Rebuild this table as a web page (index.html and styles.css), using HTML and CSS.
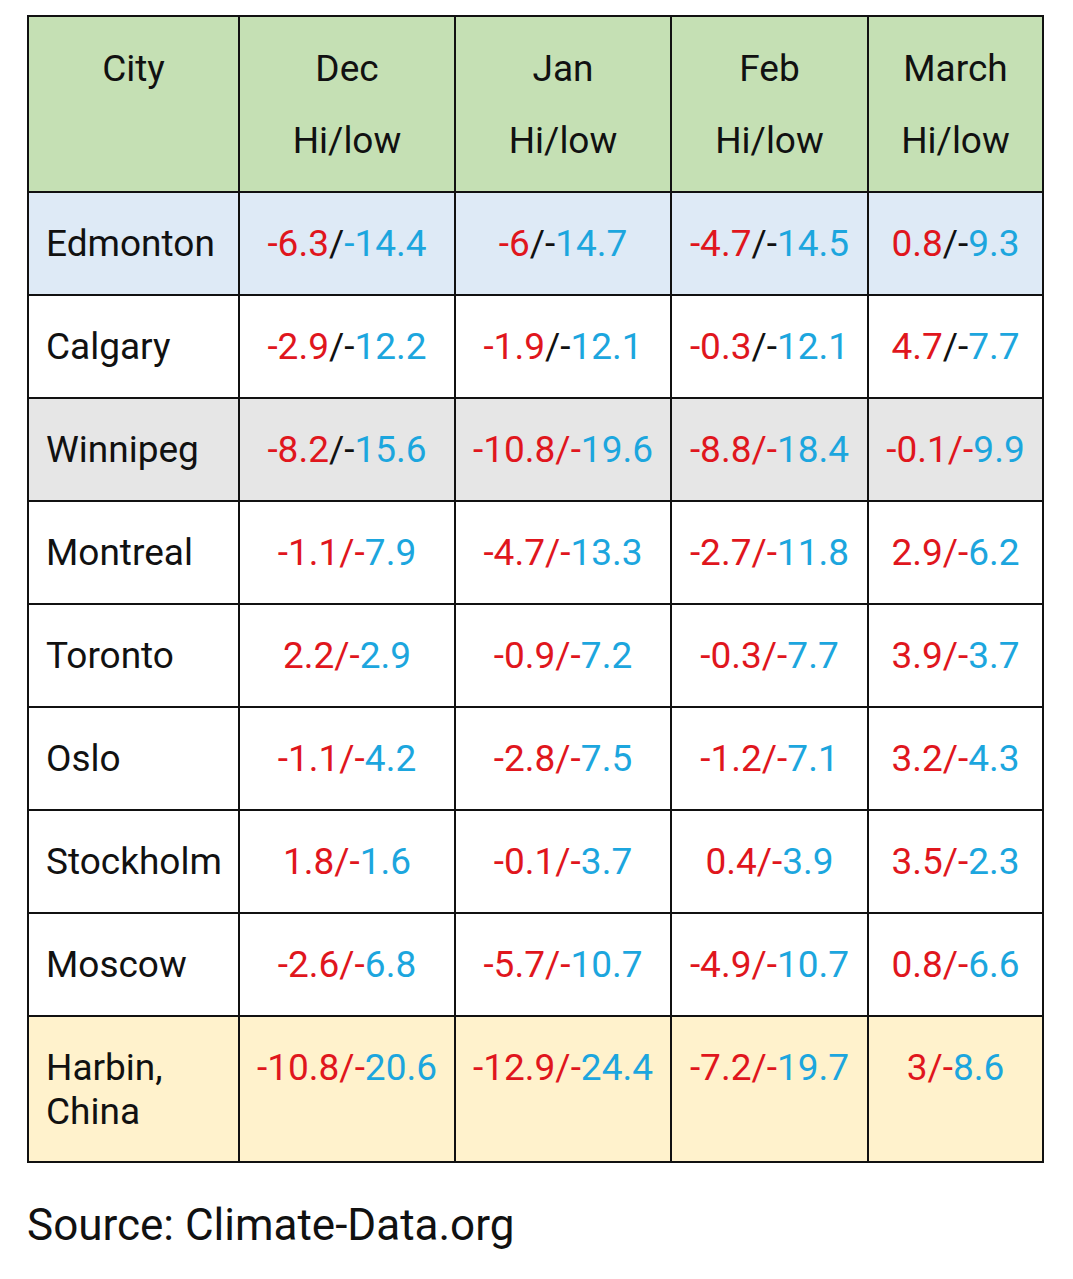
FILE: index.html
```html
<!DOCTYPE html>
<html>
<head>
<meta charset="utf-8">
<link rel="stylesheet" href="styles.css">
</head>
<body>
<div class="page">
<table class="climate">
  <colgroup>
    <col class="c-city"><col class="c-dec"><col class="c-jan"><col class="c-feb"><col class="c-mar">
  </colgroup>
  <thead>
    <tr class="head">
      <th class="city-h"><span class="ln">City</span></th>
      <th><span class="ln">Dec</span><span class="ln">Hi/low</span></th>
      <th><span class="ln">Jan</span><span class="ln">Hi/low</span></th>
      <th><span class="ln">Feb</span><span class="ln">Hi/low</span></th>
      <th><span class="ln">March</span><span class="ln">Hi/low</span></th>
    </tr>
  </thead>
  <tbody>
    <tr class="r-blue">
      <td class="city">Edmonton</td>
      <td><span class="hi">-6.3</span><span class="sep">/</span><span class="lo">-14.4</span></td>
      <td><span class="hi">-6</span><span class="sep">/-</span><span class="lo">14.7</span></td>
      <td><span class="hi">-4.7</span><span class="sep">/-</span><span class="lo">14.5</span></td>
      <td><span class="hi">0.8</span><span class="sep">/-</span><span class="lo">9.3</span></td>
    </tr>
    <tr>
      <td class="city">Calgary</td>
      <td><span class="hi">-2.9</span><span class="sep">/-</span><span class="lo">12.2</span></td>
      <td><span class="hi">-1.9</span><span class="sep">/-</span><span class="lo">12.1</span></td>
      <td><span class="hi">-0.3</span><span class="sep">/-</span><span class="lo">12.1</span></td>
      <td><span class="hi">4.7</span><span class="sep">/-</span><span class="lo">7.7</span></td>
    </tr>
    <tr class="r-grey">
      <td class="city">Winnipeg</td>
      <td><span class="hi">-8.2</span><span class="sep">/-</span><span class="lo">15.6</span></td>
      <td><span class="hi">-10.8/-</span><span class="lo">19.6</span></td>
      <td><span class="hi">-8.8/-</span><span class="lo">18.4</span></td>
      <td><span class="hi">-0.1/-</span><span class="lo">9.9</span></td>
    </tr>
    <tr>
      <td class="city">Montreal</td>
      <td><span class="hi">-1.1/-</span><span class="lo">7.9</span></td>
      <td><span class="hi">-4.7/-</span><span class="lo">13.3</span></td>
      <td><span class="hi">-2.7/-</span><span class="lo">11.8</span></td>
      <td><span class="hi">2.9/-</span><span class="lo">6.2</span></td>
    </tr>
    <tr>
      <td class="city">Toronto</td>
      <td><span class="hi">2.2/-</span><span class="lo">2.9</span></td>
      <td><span class="hi">-0.9/-</span><span class="lo">7.2</span></td>
      <td><span class="hi">-0.3/-</span><span class="lo">7.7</span></td>
      <td><span class="hi">3.9/-</span><span class="lo">3.7</span></td>
    </tr>
    <tr>
      <td class="city">Oslo</td>
      <td><span class="hi">-1.1/-</span><span class="lo">4.2</span></td>
      <td><span class="hi">-2.8/-</span><span class="lo">7.5</span></td>
      <td><span class="hi">-1.2/-</span><span class="lo">7.1</span></td>
      <td><span class="hi">3.2/-</span><span class="lo">4.3</span></td>
    </tr>
    <tr>
      <td class="city">Stockholm</td>
      <td><span class="hi">1.8/-</span><span class="lo">1.6</span></td>
      <td><span class="hi">-0.1/-</span><span class="lo">3.7</span></td>
      <td><span class="hi">0.4/-</span><span class="lo">3.9</span></td>
      <td><span class="hi">3.5/-</span><span class="lo">2.3</span></td>
    </tr>
    <tr>
      <td class="city">Moscow</td>
      <td><span class="hi">-2.6/-</span><span class="lo">6.8</span></td>
      <td><span class="hi">-5.7/-</span><span class="lo">10.7</span></td>
      <td><span class="hi">-4.9/-</span><span class="lo">10.7</span></td>
      <td><span class="hi">0.8/-</span><span class="lo">6.6</span></td>
    </tr>
    <tr class="r-yellow tall">
      <td class="city">Harbin,<br>China</td>
      <td><span class="hi">-10.8/-</span><span class="lo">20.6</span></td>
      <td><span class="hi">-12.9/-</span><span class="lo">24.4</span></td>
      <td><span class="hi">-7.2/-</span><span class="lo">19.7</span></td>
      <td><span class="hi">3/-</span><span class="lo">8.6</span></td>
    </tr>
  </tbody>
</table>
<p class="source">Source: Climate-Data.org</p>
</div>
</body>
</html>
```
FILE: styles.css
```css
html, body {
  margin: 0;
  padding: 0;
  background: #ffffff;
}
body {
  font-family: Roboto, "Noto Sans", "Liberation Sans", sans-serif;
  color: #111111;
}
.page {
  padding: 15px 0 0 27px;
}
.climate {
  border-collapse: collapse;
  table-layout: fixed;
  width: 1017px;
  font-size: 37px;
}
.c-city { width: 211px; }
.c-dec { width: 216px; }
.c-jan { width: 216px; }
.c-feb { width: 197px; }
.c-mar { width: 175px; }
.climate th,
.climate td {
  border: 2px solid #111111;
  padding: 0;
  vertical-align: top;
}
.head th {
  background: #c5e0b4;
  font-weight: 400;
  height: 176px;
  padding-top: 16px;
  box-sizing: border-box;
  text-align: center;
}
.head .ln {
  display: block;
  line-height: 72px;
}
.climate td {
  height: 103px;
  box-sizing: border-box;
  padding-top: 29px;
  line-height: 44px;
  text-align: center;
  white-space: nowrap;
}
.climate td.city {
  text-align: left;
  padding-left: 17px;
}
.climate tr.tall td {
  height: 146px;
}
.r-blue td { background: #deeaf6; }
.r-grey td { background: #e6e6e6; }
.r-yellow td { background: #fff2cc; }
.hi { color: #e0161d; }
.lo { color: #1ca6de; }
.sep { color: #111111; }
.source {
  margin: 36px 0 0 0;
  font-size: 44px;
  line-height: 52px;
}
```
